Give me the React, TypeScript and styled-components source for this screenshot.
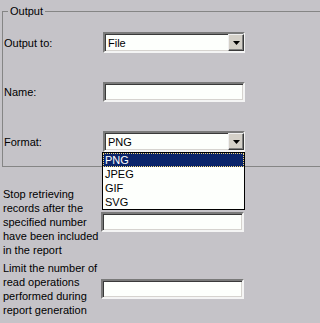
import React from 'react';
import styled, { createGlobalStyle } from 'styled-components';

const GlobalStyle = createGlobalStyle`
  html, body {
    margin: 0;
    padding: 0;
    background: #c5c3c8;
    overflow: hidden;
  }

  body {
    font-family: 'Liberation Sans', Arial, sans-serif;
    font-size: 11px;
    line-height: 14px;
    color: #000;
  }
`;

const Page = styled.div`
  padding: 4px 0 0 2px;
`;

// the group box runs past the right edge, so no right border shows
const Group = styled.fieldset`
  margin: 0;
  padding: 14px 0 14px 1px;
  border: 1px solid #858585;
  border-right: none;
  min-width: 0;

  legend {
    margin-left: 4px;
    padding: 0 2px;
    font-size: 11px;
    line-height: 14px;
  }
`;

const Form = styled.div<{ $labelWidth: number; $gap: number }>`
  display: grid;
  grid-template-columns: ${(p) => p.$labelWidth}px 142px;
  row-gap: ${(p) => p.$gap}px;
  align-items: center;
`;

const Label = styled.span`
  white-space: normal;
`;

const Sunken = styled.div`
  box-sizing: border-box;
  position: relative;
  display: flex;
  align-items: center;
  height: 21px;
  background: #fdfffc;
  border-style: solid;
  border-width: 2px;
  border-color: #7a7a7a #f4f4f4 #f4f4f4 #7a7a7a;
  box-shadow: inset 1px 1px 0 #3a3a3a, inset -1px -1px 0 #d6d3cf;
`;

const TextBox = styled(Sunken)`
  height: 20px;
`;

const SelectValue = styled.span`
  flex: 1;
  padding-left: 3px;
`;

const ArrowButton = styled.span`
  box-sizing: border-box;
  width: 16px;
  height: 17px;
  margin-right: -1px;
  display: flex;
  align-items: center;
  justify-content: center;
  background: #d4d0c8;
  border-style: solid;
  border-width: 1px;
  border-color: #f0f0f0 #3a3a3a #3a3a3a #f0f0f0;
  box-shadow: inset -1px -1px 0 #808080;
`;

const DropList = styled.ul`
  position: absolute;
  top: 19px;
  left: -3px;
  width: 143px;
  box-sizing: border-box;
  margin: 0;
  padding: 0;
  list-style: none;
  background: #fdfffc;
  border: 1px solid #000;
  z-index: 2;
`;

const Option = styled.li<{ $active?: boolean }>`
  height: 14px;
  line-height: 14px;
  padding-left: 2px;
  box-sizing: border-box;
  background: ${(p) => (p.$active ? '#0a246a' : 'transparent')};
  color: ${(p) => (p.$active ? '#fff' : '#000')};
  outline: ${(p) => (p.$active ? '1px dotted #f2d77a' : 'none')};
  outline-offset: -1px;
`;

const Limits = styled(Form)`
  margin-top: 20px;
  padding-left: 1px;
  grid-template-columns: 98px 143px;
`;

const Caret = () => (
  <svg width="7" height="4" viewBox="0 0 7 4">
    <path d="M0 0h7L3.5 4z" fill="#000" />
  </svg>
);

const Select: React.FC<{ value: string; options?: string[] }> = ({ value, options }) => (
  <Sunken>
    <SelectValue>{value}</SelectValue>
    <ArrowButton>
      <Caret />
    </ArrowButton>
    {options && (
      <DropList>
        {options.map((o) => (
          <Option key={o} $active={o === value}>
            {o}
          </Option>
        ))}
      </DropList>
    )}
  </Sunken>
);

const App: React.FC = () => {
  return (
    <Page>
      <GlobalStyle />
      <Group>
        <legend>Output</legend>
        <Form $labelWidth={99} $gap={29}>
          <Label>Output to:</Label>
          <Select value="File" />

          <Label>Name:</Label>
          <TextBox />

          <Label>Format:</Label>
          <Select value="PNG" options={['PNG', 'JPEG', 'GIF', 'SVG']} />
        </Form>
      </Group>

      <Limits $labelWidth={98} $gap={4}>
        <Label>Stop retrieving records after the specified number have been included in the report</Label>
        <TextBox />

        <Label>Limit the number of read operations performed during report generation</Label>
        <TextBox />
      </Limits>
    </Page>
  );
};

export default App;
